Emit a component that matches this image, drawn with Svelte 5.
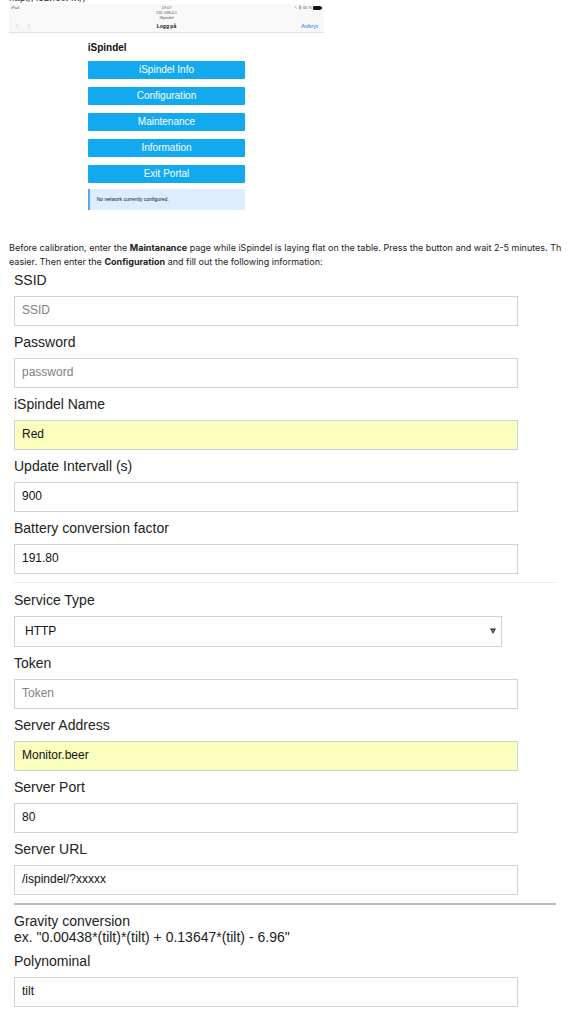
<script>
  const portalLinks = ['iSpindel Info', 'Configuration', 'Maintenance', 'Information', 'Exit Portal'];

  const deviceFields = [
    { id: 'ssid', label: 'SSID', placeholder: 'SSID', value: '' },
    { id: 'password', label: 'Password', placeholder: 'password', value: '', type: 'password' },
    { id: 'name', label: 'iSpindel Name', value: 'Red', filled: true },
    { id: 'interval', label: 'Update Intervall (s)', value: '900' },
    { id: 'battery', label: 'Battery conversion factor', value: '191.80' },
  ];

  const serverFields = [
    { id: 'token', label: 'Token', placeholder: 'Token', value: '' },
    { id: 'address', label: 'Server Address', value: 'Monitor.beer', filled: true },
    { id: 'port', label: 'Server Port', value: '80' },
    { id: 'url', label: 'Server URL', value: '/ispindel/?xxxxx' },
  ];

  const gravityFields = [{ id: 'polynominal', label: 'Polynominal', value: 'tilt' }];
</script>

{#snippet fieldList(fields)}
  {#each fields as field (field.id)}
    <div class="field">
      <label for={field.id}>{field.label}</label>
      <input
        id={field.id}
        class:filled={field.filled}
        type={field.type ?? 'text'}
        placeholder={field.placeholder}
        value={field.value}
      />
    </div>
  {/each}
{/snippet}

<main class="page">
  <div class="previous">http://192.168.4.1/)</div>

  <section class="portal">
    <header class="bar">
      <div class="bar-side">
        <span>iPad</span>
        <div class="arrows">
          <svg viewBox="0 0 4 6"><path d="M3.5 0.5 L1 3 L3.5 5.5" /></svg>
          <svg viewBox="0 0 4 6"><path d="M0.5 0.5 L3 3 L0.5 5.5" /></svg>
        </div>
      </div>
      <div class="bar-center">
        <span>19:07</span>
        <span>192.168.4.1</span>
        <span>iSpindel</span>
        <strong>Logg på</strong>
      </div>
      <div class="bar-side bar-side--right">
        <div class="status">
          <svg class="signal" viewBox="0 0 8 5">
            <path d="M0.5 1 L2.5 3.5 M5 1 L7 3.5 L6 4.5 V0.5 L7 1.5 L5 4" />
          </svg>
          <span>65 %</span>
          <svg class="battery" viewBox="0 0 9 4">
            <rect width="8" height="4" rx="1" />
            <rect x="8" y="1" width="1" height="2" />
          </svg>
        </div>
        <a href="#cancel">Avbryt</a>
      </div>
    </header>

    <div class="portal-body">
      <h1>iSpindel</h1>
      <div class="portal-links">
        {#each portalLinks as link (link)}
          <button type="button">{link}</button>
        {/each}
      </div>
      <p class="note">No network currently configured.</p>
    </div>
  </section>

  <p class="intro">
    Before calibration, enter the <b>Maintanance</b> page while iSpindel is laying flat on the table. Press the button and wait 2-5 minutes. Th<br />
    easier. Then enter the <b>Configuration</b> and fill out the following information:
  </p>

  <form>
    {@render fieldList(deviceFields)}
    <hr />
    <div class="field">
      <label for="service">Service Type</label>
      <div class="select">
        <select id="service">
          <option>HTTP</option>
        </select>
        <svg viewBox="0 0 6 6"><path d="M0 0.5 H6 L3 6 Z" /><path class="dot" d="M2 2 H4 L3 3.5 Z" /></svg>
      </div>
    </div>
    {@render fieldList(serverFields)}
    <hr class="strong" />
    <p class="gravity">Gravity conversion<br />ex. "0.00438*(tilt)*(tilt) + 0.13647*(tilt) - 6.96"</p>
    {@render fieldList(gravityFields)}
  </form>
</main>

<style>
  :global(body) {
    margin: 0;
    background: #fff;
  }

  .page {
    overflow: hidden;
    font-family: 'Liberation Sans', Arial, sans-serif;
    color: #222;
  }

  .previous {
    display: flex;
    align-items: flex-end;
    height: 4px;
    margin-left: 9px;
    overflow: hidden;
    font-family: Inter, 'Liberation Sans', sans-serif;
    font-size: 9px;
    line-height: 12px;
  }

  .portal {
    max-width: 315px;
    margin-left: 9px;
  }

  .bar {
    display: grid;
    grid-template-columns: 1fr 1fr 1fr;
    height: 28px;
    background: #f8f8f8;
    border-bottom: 1px solid #e2e2e2;
    color: #555;
    font-size: 4px;
    line-height: 5px;
  }

  .bar-side,
  .bar-center {
    display: flex;
    flex-direction: column;
    justify-content: space-between;
    padding: 1px 2px 3px;
  }

  .bar-center {
    align-items: center;
    justify-content: flex-start;
    padding-inline: 0;
  }

  .bar-center strong {
    margin-top: 4px;
    font-size: 5px;
    color: #111;
  }

  .bar-side--right {
    align-items: flex-end;
  }

  .arrows {
    display: flex;
    gap: 8px;
    padding: 0 4px;
  }

  .arrows svg {
    width: 4px;
    height: 6px;
    fill: none;
    stroke: #ccc;
    stroke-width: 0.7;
  }

  .status {
    display: flex;
    align-items: center;
    gap: 1px;
  }

  .signal {
    width: 8px;
    height: 5px;
    fill: none;
    stroke: #777;
    stroke-width: 0.5;
  }

  .battery {
    width: 9px;
    height: 4px;
    fill: #111;
  }

  .bar a {
    margin-right: 4px;
    font-size: 6px;
    color: #0a7aff;
    text-decoration: none;
  }

  .portal-body {
    width: 50%;
    margin: 0 auto;
    padding-top: 9px;
  }

  h1 {
    margin: 0 0 7px;
    font-size: 10px;
    line-height: 12px;
    color: #111;
  }

  .portal-links {
    display: grid;
    gap: 8px;
  }

  button {
    height: 18px;
    padding: 0;
    border: 0;
    border-radius: 1px;
    background: #13a9ee;
    color: #fff;
    font-family: inherit;
    font-size: 10px;
    line-height: 18px;
  }

  .note {
    margin: 6px 0 0;
    padding-left: 7px;
    border-left: 2px solid #5ba3e6;
    background: #dcedff;
    font-size: 5px;
    line-height: 21px;
    color: #111;
  }

  .intro {
    margin: 31px 0 0 9px;
    font-family: Inter, 'Liberation Sans', sans-serif;
    font-size: 9px;
    line-height: 14px;
    white-space: nowrap;
  }

  form {
    margin: 3px 13px 0 14px;
    font-size: 14px;
    line-height: 16px;
  }

  .field {
    display: flex;
    flex-direction: column;
    align-items: flex-start;
    gap: 8px;
    margin-bottom: 8px;
  }

  input,
  select {
    box-sizing: border-box;
    width: 100%;
    height: 30px;
    margin: 0;
    padding: 0 7px 2px;
    border: 1px solid #d2d2d2;
    border-radius: 0;
    background: #fff;
    color: #111;
    font-family: inherit;
    font-size: 12px;
  }

  input {
    width: 93%;
  }

  input.filled {
    background: #faffbd;
  }

  input::placeholder {
    color: #808080;
  }

  .select {
    position: relative;
    width: 90%;
  }

  select {
    display: block;
    height: 31px;
    padding-left: 10px;
    appearance: none;
  }

  .select svg {
    position: absolute;
    top: 12px;
    right: 6px;
    width: 6px;
    height: 6px;
    fill: #333;
    pointer-events: none;
  }

  .select .dot {
    fill: #ccc;
  }

  hr {
    height: 1px;
    margin: 0 0 9px;
    border: 0;
    background: #ececec;
  }

  hr.strong {
    height: 2px;
    margin-bottom: 8px;
    background: #bbb;
  }

  .gravity {
    margin: 0 0 8px;
  }
</style>
